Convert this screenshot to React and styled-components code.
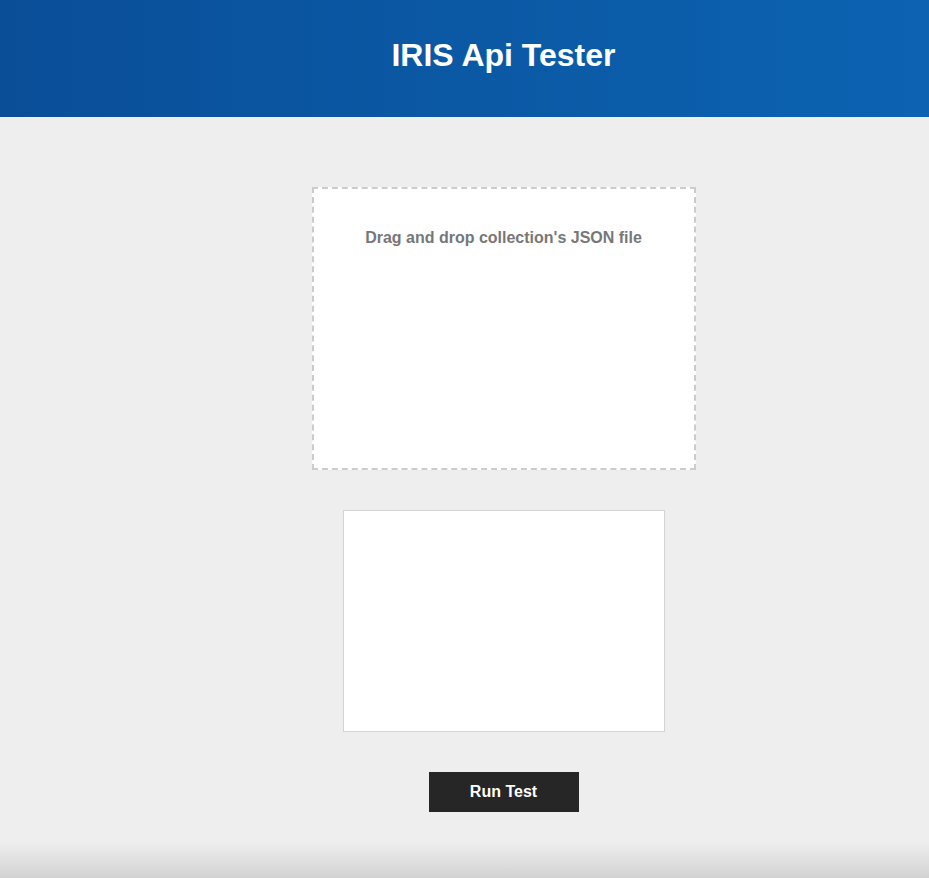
import React, { useState } from "react";
import styled, { createGlobalStyle } from "styled-components";

function App() {
  const [fileName, setfileName] = useState("");
  const [output, setoutput] = useState("");

  const handledrop = (e) => {
    e.preventDefault();
    const file = e.dataTransfer.files && e.dataTransfer.files[0];
    if (file) setfileName(file.name);
  };

  return (
    <>
      <GlobalStyle />
      <Page>
        <Header>
          <Title>IRIS Api Tester</Title>
        </Header>
        <Main>
          <DropZone
            onDragOver={(e) => e.preventDefault()}
            onDrop={handledrop}
          >
            <span>{fileName || "Drag and drop collection's JSON file"}</span>
          </DropZone>
          <Output
            value={output}
            onChange={(e) => setoutput(e.target.value)}
          />
          <Button onClick={() => setoutput("")}>Run Test</Button>
        </Main>
      </Page>
    </>
  );
}
export default App;

const GlobalStyle = createGlobalStyle`
  body {
    margin: 0;
    font-family: "Liberation Sans", Arial, sans-serif;
  }
`;
const Page = styled.div`
  min-height: 100vh;
  display: flex;
  flex-direction: column;
  background: linear-gradient(
    to bottom,
    #eeeeee 0%,
    #eeeeee calc(100% - 36px),
    #d2d2d2 100%
  );
`;
const Header = styled.header`
  height: 117px;
  display: flex;
  align-items: center;
  justify-content: center;
  padding-left: 78px;
  box-sizing: border-box;
  background: linear-gradient(to right, #0a4e98 0%, #0c63b1 100%);
`;
const Title = styled.h1`
  margin: 0;
  margin-top: -6px;
  color: #fff;
  font-size: 32px;
  font-weight: 700;
`;
const Main = styled.main`
  display: flex;
  flex-direction: column;
  align-items: center;
  padding: 70px 0 0 78px;
  gap: 40px;
`;
const DropZone = styled.div`
  width: 380px;
  height: 239px;
  padding-top: 40px;
  box-sizing: content-box;
  background: #fff;
  border: 2px dashed #cccccc;
  display: flex;
  justify-content: center;
  span {
    color: #777;
    font-weight: 700;
    font-size: 16px;
  }
`;
const Output = styled.textarea`
  width: 320px;
  height: 220px;
  box-sizing: content-box;
  padding: 0;
  border: 1px solid #d3d3d3;
  background: #fff;
  resize: none;
  outline: none;
`;
const Button = styled.button`
  width: 150px;
  height: 40px;
  border: none;
  background: #262626;
  color: #fff;
  font-family: "Liberation Sans", Arial, sans-serif;
  font-weight: 700;
  font-size: 16px;
  cursor: pointer;
`;
